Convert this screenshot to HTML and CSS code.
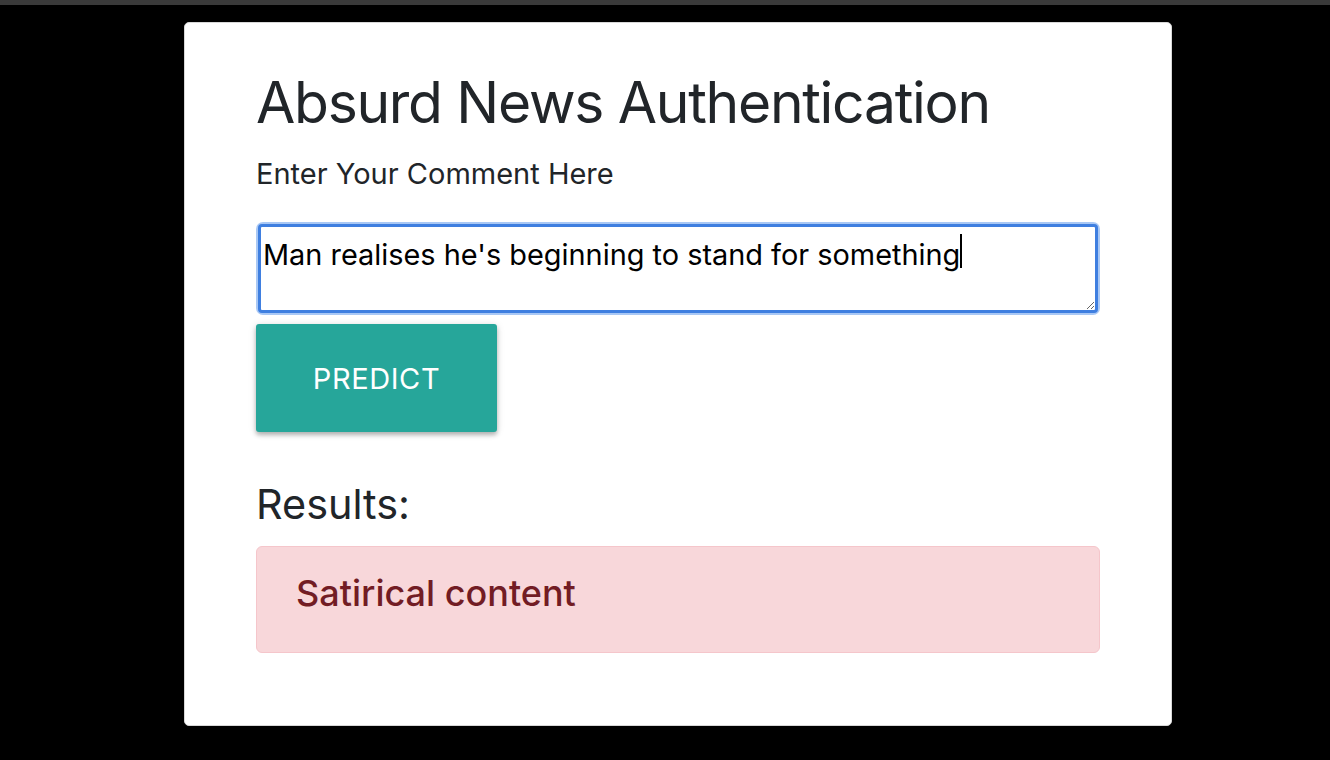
FILE: index.html
```html
<!DOCTYPE html>
<html>
<head>
<meta charset="utf-8">
<link rel="stylesheet" href="styles.css">
</head>
<body>
<div class="topbar"></div>
<div class="card">
  <h1 class="title">Absurd News Authentication</h1>
  <label class="label" for="comment">Enter Your Comment Here</label>
  <div class="field">
    <textarea id="comment" class="input">Man realises he's beginning to stand for something</textarea>
    <span class="caret"></span>
  </div>
  <button class="btn">PREDICT</button>
  <h3 class="results">Results:</h3>
  <div class="alert"><span class="alert-text">Satirical content</span></div>
</div>
</body>
</html>
```
FILE: styles.css
```css
html, body {
  margin: 0;
  padding: 0;
  background: #000;
  font-family: "Inter", "Liberation Sans", sans-serif;
  color: #212529;
}
.topbar {
  height: 5px;
  background: #3a3a3a;
}
.card {
  box-sizing: border-box;
  margin: 17px 0 0 184px;
  width: 988px;
  height: 704px;
  background: #fff;
  border: 1px solid #d8d8d8;
  border-radius: 5px;
  padding: 44px 71px 0 71px;
  display: flex;
  flex-direction: column;
  align-items: flex-start;
}
.title {
  margin: 0;
  font-size: 57px;
  font-weight: 400;
  letter-spacing: -1.3px;
  line-height: 72px;
}
.label {
  margin-top: 17px;
  font-size: 29px;
  line-height: 36px;
}
.field {
  position: relative;
  margin-top: 30px;
  width: 844px;
  box-sizing: border-box;
  padding: 2px;
  border-radius: 7px;
  background: #a9c8f5;
}
.input {
  display: block;
  box-sizing: border-box;
  width: 100%;
  height: 89px;
  margin: 0;
  border: 3px solid #3f7fe0;
  border-radius: 4px;
  padding: 10px 2px 6px;
  font-family: "Inter", "Liberation Sans", sans-serif;
  font-size: 28.9px;
  line-height: 36px;
  color: #000;
  outline: none;
  resize: vertical;
}
.caret {
  position: absolute;
  left: 704px;
  top: 12px;
  width: 1.5px;
  height: 34px;
  background: #000;
}
.btn {
  margin-top: 9px;
  width: 241px;
  height: 108px;
  background: #26a69a;
  color: #fff;
  border: none;
  border-radius: 3px;
  font-family: "Inter", "Liberation Sans", sans-serif;
  font-size: 29px;
  letter-spacing: 0.6px;
  box-shadow: 0 3px 4px rgba(0,0,0,0.25), 0 1px 8px rgba(0,0,0,0.12);
}
.results {
  margin: 46px 0 0 0;
  font-size: 41.4px;
  font-weight: 400;
  line-height: 52px;
}
.alert {
  box-sizing: border-box;
  margin-top: 16px;
  width: 844px;
  height: 107px;
  background: #f8d7da;
  border: 1px solid #f5c6cb;
  border-radius: 6px;
  color: #721c24;
  padding: 22px 39px;
}
.alert-text {
  font-size: 36px;
  font-weight: 500;
  letter-spacing: 0;
  line-height: 48px;
}
```
